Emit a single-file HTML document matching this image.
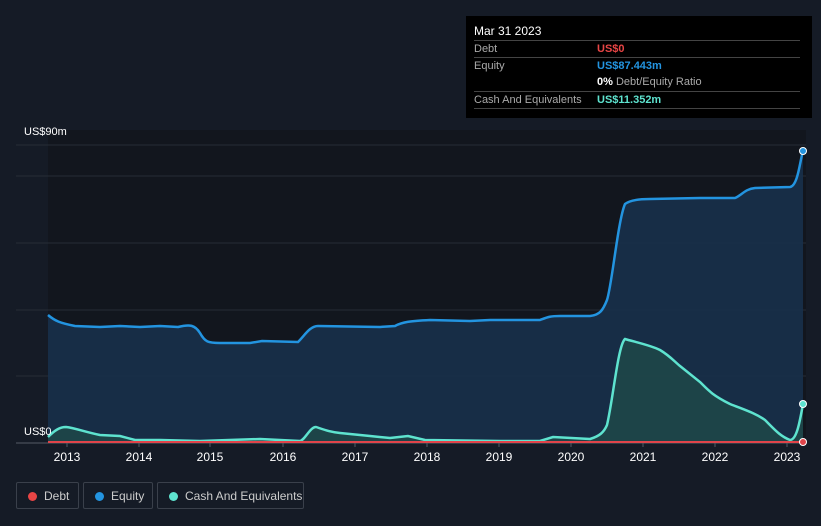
<!DOCTYPE html>
<html><head><meta charset="utf-8"><style>
body{margin:0;width:821px;height:526px;background:#151b26;font-family:"Liberation Sans",sans-serif;overflow:hidden;position:relative}
.tt{position:absolute;left:466px;top:16px;width:346px;height:102px;background:#000;color:#fff;font-size:11px}
.tt .r{position:absolute;left:8px;width:326px;border-top:1px solid #444;height:17px;line-height:17px;color:#aaa}
.tt .v{position:absolute;left:123px;font-weight:bold}
.lg{position:absolute;top:482px;height:27px;border:1px solid #3a404b;border-radius:2px;color:#ccc;font-size:12px;line-height:27px;box-sizing:border-box}
.lg i{position:absolute;left:11px;top:9px;width:9px;height:9px;border-radius:50%}
.lg span{position:absolute;left:27px;top:0}
.yr{position:absolute;top:450px;color:#fff;font-size:12px;width:40px;text-align:center}
</style></head><body>
<svg width="821" height="526" style="position:absolute;left:0;top:0">
<rect x="48" y="130" width="758" height="313" fill="#12161e"/>
<g stroke="#262c37" stroke-width="1">
<line x1="16" y1="145" x2="806" y2="145"/><line x1="16" y1="176" x2="806" y2="176"/><line x1="16" y1="243" x2="806" y2="243"/><line x1="16" y1="310" x2="806" y2="310"/><line x1="16" y1="376" x2="806" y2="376"/>
</g>
<path d="M48,315 C55,321 60,323 75,326 L100,327 120,326 140,327 160,326 178,327 C190,324 195,325 200,333 C205,342 208,343 220,343 L250,343 262,341 298,342 C305,335 310,326 318,326 L380,327 395,326 C402,322 410,321 430,320 L470,321 490,320 540,320 C548,317 550,316 560,316 L590,316 C600,315 603,310 607,300 C612,285 618,220 625,204 C630,200 640,199 650,199 L700,198 735,198 C742,195 745,189 755,188 L790,187 C798,186 800,160 803,151 L803,443 48,443Z" fill="#18304a" opacity="0.9"/>
<path d="M48,437 C55,430 60,427 66,427 C75,428 85,432 100,435 L120,436 135,440 160,440 200,441 260,439 300,441 C305,440 310,427 316,427 C325,430 330,432 340,433 L370,436 390,438 408,436 425,440 500,441 540,441 553,437 590,439 C600,436 604,432 607,425 C613,400 618,345 625,339 C635,342 650,345 660,350 C670,356 675,362 680,366 C690,374 695,378 700,382 C708,390 712,395 730,404 C745,410 755,413 765,420 C775,430 780,436 790,440 C797,440 800,420 803,404 L803,443 48,443Z" fill="#1f4a48" opacity="0.8"/>
<path d="M48,315 C55,321 60,323 75,326 L100,327 120,326 140,327 160,326 178,327 C190,324 195,325 200,333 C205,342 208,343 220,343 L250,343 262,341 298,342 C305,335 310,326 318,326 L380,327 395,326 C402,322 410,321 430,320 L470,321 490,320 540,320 C548,317 550,316 560,316 L590,316 C600,315 603,310 607,300 C612,285 618,220 625,204 C630,200 640,199 650,199 L700,198 735,198 C742,195 745,189 755,188 L790,187 C798,186 800,160 803,151" fill="none" stroke="#2394e0" stroke-width="2.5"/>
<path d="M48,437 C55,430 60,427 66,427 C75,428 85,432 100,435 L120,436 135,440 160,440 200,441 260,439 300,441 C305,440 310,427 316,427 C325,430 330,432 340,433 L370,436 390,438 408,436 425,440 500,441 540,441 553,437 590,439 C600,436 604,432 607,425 C613,400 618,345 625,339 C635,342 650,345 660,350 C670,356 675,362 680,366 C690,374 695,378 700,382 C708,390 712,395 730,404 C745,410 755,413 765,420 C775,430 780,436 790,440 C797,440 800,420 803,404" fill="none" stroke="#5ee3cf" stroke-width="2.5"/>
<line x1="16" y1="443" x2="806" y2="443" stroke="#555b66"/>
<line x1="48" y1="442" x2="803" y2="442" stroke="#e0444a" stroke-width="2"/>
<circle cx="803" cy="151" r="3.5" fill="#2394e0" stroke="#fff" stroke-width="1"/>
<circle cx="803" cy="404" r="3.5" fill="#5ee3cf" stroke="#fff" stroke-width="1"/>
<circle cx="803" cy="442" r="3.5" fill="#e0444a" stroke="#fff" stroke-width="1"/>
<g stroke="#555b66"><line x1="67" y1="443" x2="67" y2="447"/><line x1="139" y1="443" x2="139" y2="447"/><line x1="210" y1="443" x2="210" y2="447"/><line x1="283" y1="443" x2="283" y2="447"/><line x1="355" y1="443" x2="355" y2="447"/><line x1="427" y1="443" x2="427" y2="447"/><line x1="499" y1="443" x2="499" y2="447"/><line x1="571" y1="443" x2="571" y2="447"/><line x1="643" y1="443" x2="643" y2="447"/><line x1="715" y1="443" x2="715" y2="447"/><line x1="787" y1="443" x2="787" y2="447"/></g>
<text x="24" y="135" fill="#fff" font-size="11" font-family="Liberation Sans">US$90m</text>
<text x="24" y="435" fill="#fff" font-size="11" font-family="Liberation Sans">US$0</text>
</svg>
<div class="yr" style="left:47px">2013</div><div class="yr" style="left:119px">2014</div><div class="yr" style="left:190px">2015</div><div class="yr" style="left:263px">2016</div><div class="yr" style="left:335px">2017</div><div class="yr" style="left:407px">2018</div><div class="yr" style="left:479px">2019</div><div class="yr" style="left:551px">2020</div><div class="yr" style="left:623px">2021</div><div class="yr" style="left:695px">2022</div><div class="yr" style="left:767px">2023</div>
<div class="tt">
<div style="position:absolute;left:8px;top:8px;font-size:12px">Mar 31 2023</div>
<div class="r" style="top:24px">Debt<span class="v" style="color:#e84545">US$0</span></div>
<div class="r" style="top:41px">Equity<span class="v" style="color:#2394e0">US$87.443m</span></div>
<div class="r" style="top:58px;border-top:none"><span class="v" style="color:#fff">0% <b style="color:#aaa;font-weight:normal">Debt/Equity Ratio</b></span></div>
<div class="r" style="top:75px">Cash And Equivalents<span class="v" style="color:#5ee3cf">US$11.352m</span></div>
<div class="r" style="top:92px;height:0"></div>
</div>
<div class="lg" style="left:16px;width:63px"><i style="background:#e84545"></i><span>Debt</span></div>
<div class="lg" style="left:83px;width:70px"><i style="background:#2394e0"></i><span>Equity</span></div>
<div class="lg" style="left:157px;width:147px"><i style="background:#5ee3cf"></i><span>Cash And Equivalents</span></div>
</body></html>
